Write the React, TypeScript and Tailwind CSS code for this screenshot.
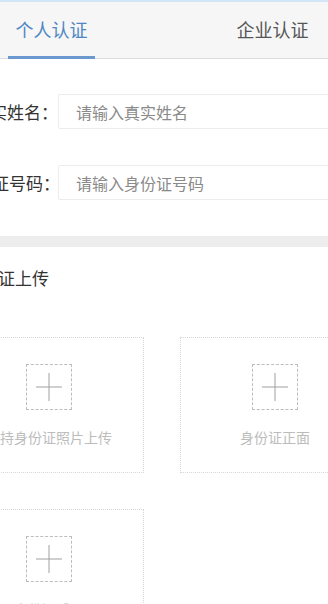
import React from "react";

const font = { fontFamily: '"Noto Sans CJK SC", "Noto Sans", sans-serif' };

function Plus() {
  return (
    <div className="w-[46px] h-[46px] border border-dashed border-[#bdbdbd] flex items-center justify-center">
      <svg width="28" height="28" viewBox="0 0 28 28">
        <line x1="1" y1="14" x2="27" y2="14" stroke="#a0a0a0" strokeWidth="1" />
        <line x1="14" y1="0" x2="14" y2="28" stroke="#a0a0a0" strokeWidth="1" />
      </svg>
    </div>
  );
}

function Card({ label }: { label: string }) {
  return (
    <div className="h-[136px] border border-dotted border-[#d6d6d6] flex flex-col items-center pt-[26px]">
      <Plus />
      <div className="mt-[17px] text-[14px] leading-[20px] text-[#bcbcbc] whitespace-nowrap">{label}</div>
    </div>
  );
}

function Field({ label, placeholder }: { label: string; placeholder: string }) {
  return (
    <div className="flex items-center h-[35px]">
      <div className="w-[100px] ml-[-42px] shrink-0 text-right text-[17px] text-[#333] whitespace-nowrap leading-[35px]">
        {label}
      </div>
      <div className="w-[300px] shrink-0 h-[35px] border border-[#ececec] rounded-[2px] flex items-center pl-[17px] text-[16px] text-[#8a8a8a] whitespace-nowrap">
        {placeholder}
      </div>
    </div>
  );
}

export default function App() {
  return (
    <div className="w-[328px] h-[604px] overflow-hidden bg-white" style={font}>
      <div className="h-[2px] bg-[#d3e6f8]" />
      <div className="h-[57px] bg-[#f6f6f6] border-b border-[#dcdcdc] flex justify-between pl-[8px] pr-[12px]">
        <div className="w-[87px] relative flex items-center justify-center">
          <span className="text-[18px] text-[#4f86c4] leading-[24px] mt-[-2px]">个人认证</span>
          <div className="absolute left-0 right-0 bottom-[-1px] h-[3px] bg-[#6a98cf]" />
        </div>
        <div className="w-[87px] flex items-center justify-center">
          <span className="text-[18px] text-[#555] leading-[24px] mt-[-2px]">企业认证</span>
        </div>
      </div>
      <div className="pt-[35px] pb-[36px] flex flex-col gap-[36px] overflow-hidden">
        <Field label="真实姓名：" placeholder="请输入真实姓名" />
        <Field label="身份证号码：" placeholder="请输入身份证号码" />
      </div>
      <div className="h-[11px] bg-[#ededed]" />
      <div className="ml-[-36px] mt-[19px] text-[17px] leading-[24px] text-[#333] whitespace-nowrap">身份证上传</div>
      <div className="ml-[-46px] mt-[47px] grid grid-cols-[190px_190px] gap-[36px]">
        <Card label="手持身份证照片上传" />
        <Card label="身份证正面" />
        <Card label="身份证反面" />
      </div>
    </div>
  );
}
